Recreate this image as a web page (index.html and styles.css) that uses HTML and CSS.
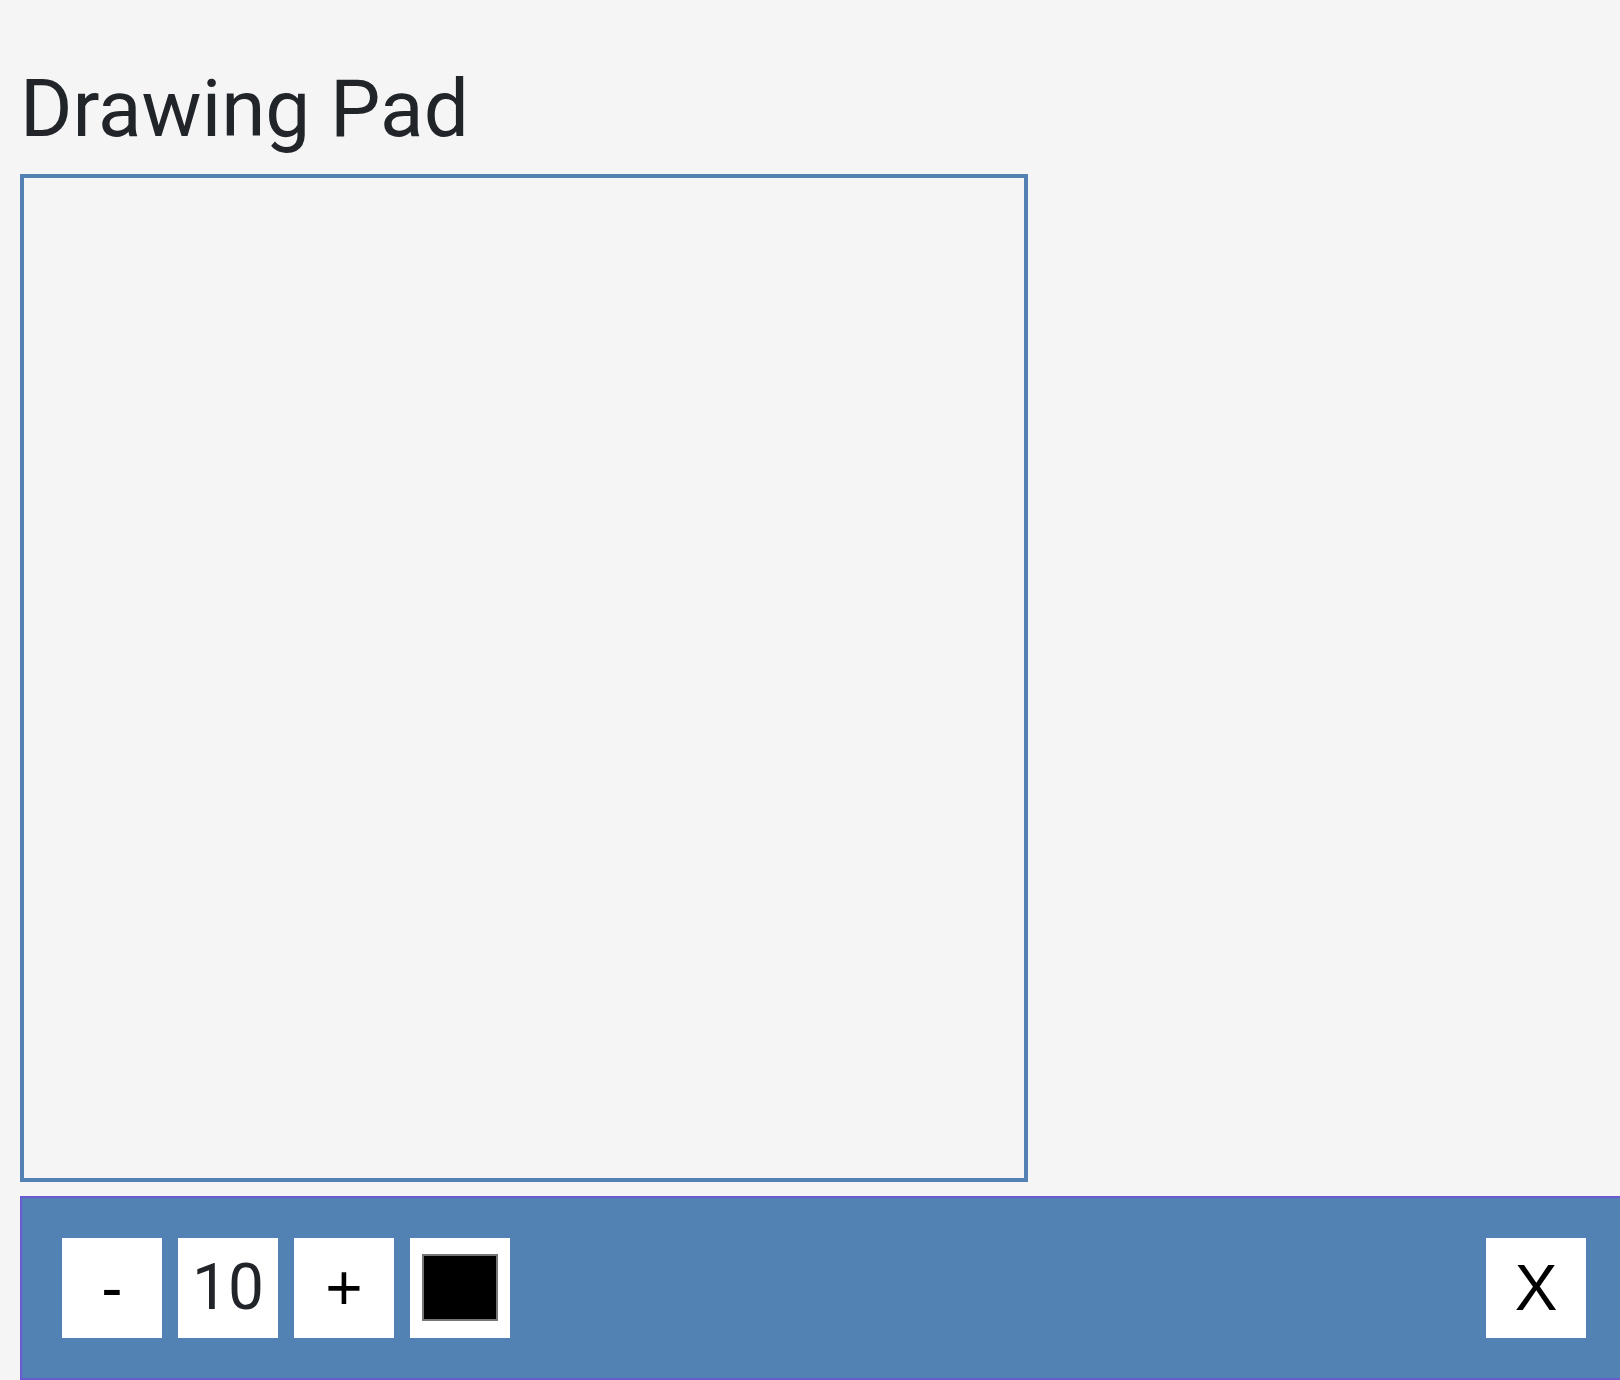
FILE: index.html
```html
<!DOCTYPE html>
<html lang="en">
<head>
<meta charset="utf-8">
<title>Drawing Pad</title>
<link rel="stylesheet" href="styles.css">
</head>
<body>
<h1 class="title">Drawing Pad</h1>
<div class="canvas"></div>
<div class="toolbar">
  <button class="tool-btn" type="button">-</button>
  <span class="size">10</span>
  <button class="tool-btn" type="button">+</button>
  <div class="color-btn"><div class="swatch"></div></div>
  <button class="tool-btn clear" type="button">X</button>
</div>
</body>
</html>
```
FILE: styles.css
```css
html, body {
  margin: 0;
  padding: 0;
  overflow: hidden;
}
body {
  background: #f5f5f5;
  padding-left: 20px;
  font-family: Roboto, "Liberation Sans", sans-serif;
  color: #212529;
}
.title {
  margin: 61px 0 17px 0;
  font-family: Roboto, sans-serif;
  font-weight: 400;
  font-size: 80px;
  line-height: 96px;
  color: #212529;
}
.canvas {
  width: 1000px;
  height: 1000px;
  border: 4px solid #5282b3;
}
.toolbar {
  margin-top: 14px;
  display: flex;
  align-items: center;
  gap: 16px;
  background: #5282b3;
  border: 2px solid #6a5acd;
  border-right: none;
  padding: 40px 34px 40px 40px;
  height: 100px;
}
.tool-btn, .size, .color-btn {
  width: 100px;
  height: 100px;
  background: #ffffff;
  border: none;
  padding: 0;
  margin: 0;
  display: flex;
  align-items: center;
  justify-content: center;
  box-sizing: border-box;
}
.tool-btn {
  font-family: "Liberation Sans", Arial, sans-serif;
  font-size: 64px;
  line-height: 1;
  color: #000000;
}
.size {
  font-family: Roboto, sans-serif;
  font-size: 64px;
  line-height: 1;
  color: #212529;
}
.color-btn {
  align-items: flex-start;
  padding-top: 16px;
}
.swatch {
  width: 76px;
  height: 67px;
  box-sizing: border-box;
  background: #000000;
  border: 2px solid #767676;
}
.clear {
  margin-left: auto;
}
```
